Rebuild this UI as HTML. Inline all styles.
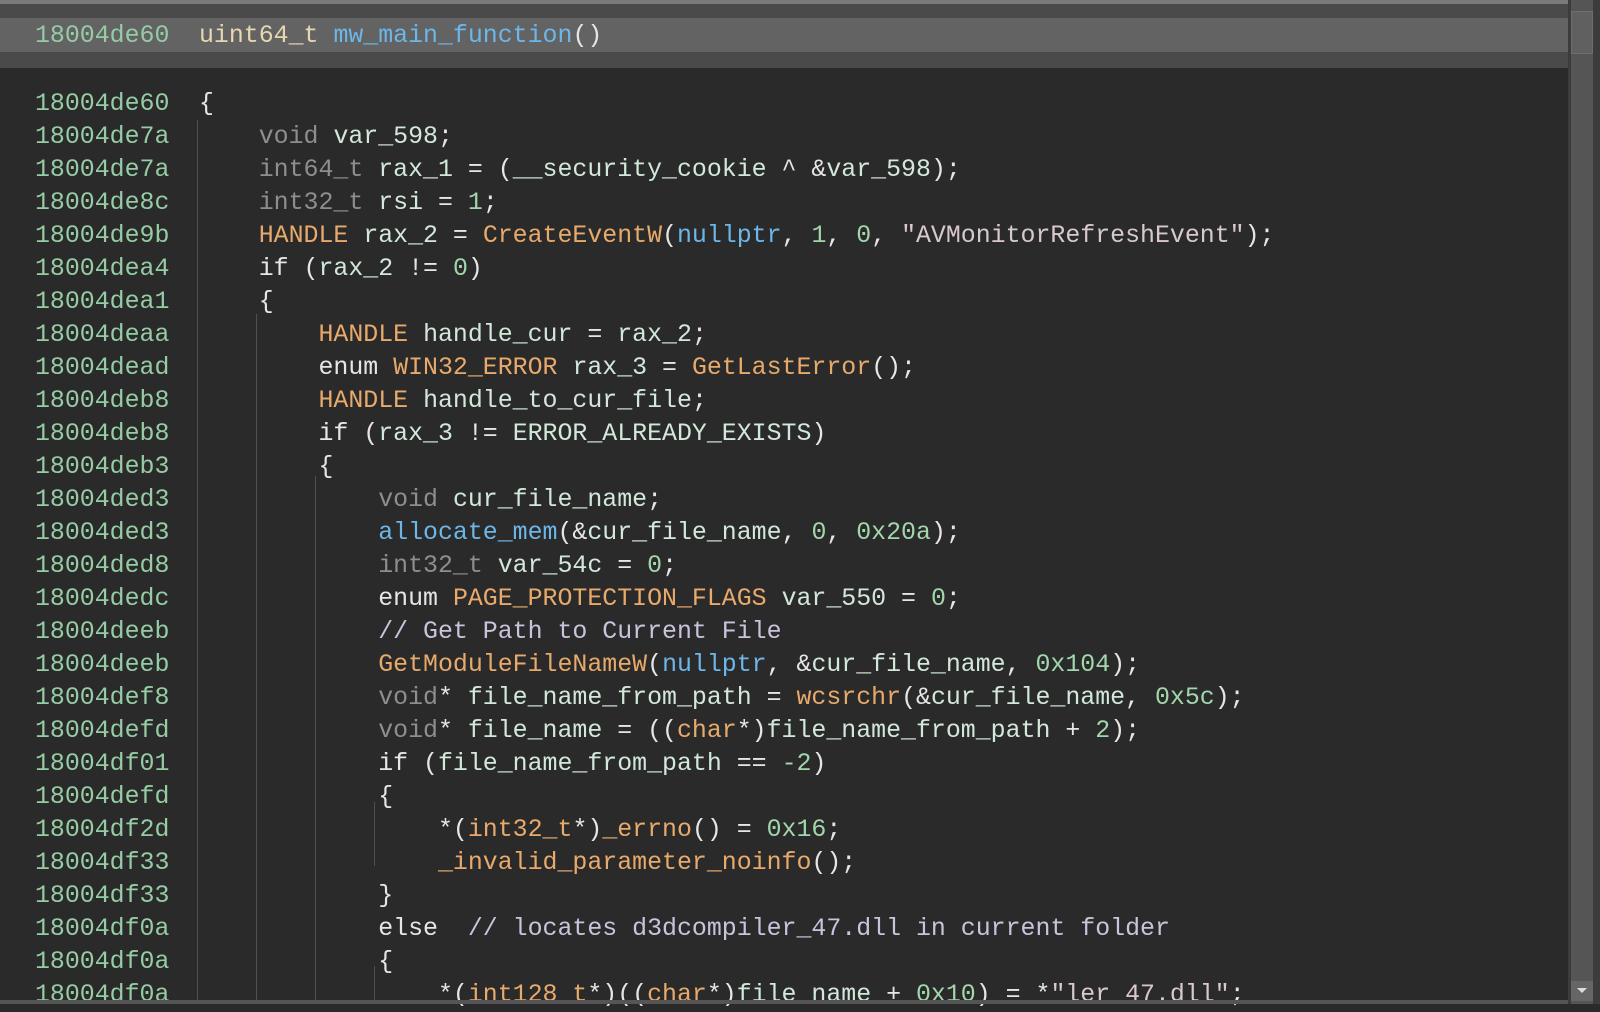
<!DOCTYPE html>
<html><head><meta charset="utf-8"><style>
body{margin:0;width:1600px;height:1004px;background:#2a2a2a;overflow:hidden;position:relative;font-family:"Liberation Mono",monospace;font-size:24.9px;}
.top{position:absolute;left:0;top:0;width:1568px;height:68px;background:#4a4a4a;}
.top .edge{position:absolute;left:0;top:0;width:1568px;height:4px;background:#7a7a7a;}
.hl{position:absolute;left:0;top:18px;width:1568px;height:34px;background:#636363;}
.sb{position:absolute;left:1568px;top:0;width:32px;height:1004px;background:#3c3c3c;}
.track{position:absolute;left:1571px;top:0;width:22px;height:1004px;background:#555;}
.thumb{position:absolute;left:1571px;top:11px;width:22px;height:43px;background:#606060;border:1px solid #6e6e6e;box-sizing:border-box;}
.arrow{position:absolute;left:1571px;top:981px;width:22px;height:20px;background:#666;}
.arrow:after{content:"";position:absolute;left:6px;top:7px;border-left:5px solid transparent;border-right:5px solid transparent;border-top:5px solid #ddd;}
.bot{position:absolute;left:0;top:1000px;width:1568px;height:4px;background:#555;}
.l{position:absolute;left:35px;height:33px;line-height:33px;white-space:pre;color:#e6e6e6;}
.a{color:#95cca4;display:inline-block;width:164px;}
.t{color:#8e8e8e}.o{color:#e8aa6c}.b{color:#6cb6e8}.n{color:#a2d6ac}.v{color:#d2e8da}.c{color:#cbc3dc}.s{color:#d8c8d0}.k{color:#e8e8e8}
.g{position:absolute;width:1px;background:#505050;}
</style></head><body>
<div class="top"><div class="edge"></div></div>
<div class="hl"></div>
<div class="l" style="top:20px"><span class="a">18004de60</span><span class="s" style="color:#e8d6b0">uint64_t</span> <span class="b">mw_main_function</span>()</div>
<div class="g" style="left:197px;top:120px;height:884px"></div>
<div class="g" style="left:256px;top:314px;height:690px"></div>
<div class="g" style="left:315px;top:476px;height:528px"></div>
<div class="g" style="left:374px;top:802px;height:64px"></div>
<div class="g" style="left:374px;top:966px;height:38px"></div>
<div class="l" style="top:88px"><span class="a">18004de60</span>{</div>
<div class="l" style="top:121px"><span class="a">18004de7a</span>    <span class="t">void</span> <span class="v">var_598</span>;</div>
<div class="l" style="top:154px"><span class="a">18004de7a</span>    <span class="t">int64_t</span> <span class="v">rax_1</span> = (<span class="v">__security_cookie</span> ^ &amp;<span class="v">var_598</span>);</div>
<div class="l" style="top:187px"><span class="a">18004de8c</span>    <span class="t">int32_t</span> <span class="v">rsi</span> = <span class="n">1</span>;</div>
<div class="l" style="top:220px"><span class="a">18004de9b</span>    <span class="o">HANDLE</span> <span class="v">rax_2</span> = <span class="o">CreateEventW</span>(<span class="b">nullptr</span>, <span class="n">1</span>, <span class="n">0</span>, <span class="s">"AVMonitorRefreshEvent"</span>);</div>
<div class="l" style="top:253px"><span class="a">18004dea4</span>    if (<span class="v">rax_2</span> != <span class="n">0</span>)</div>
<div class="l" style="top:286px"><span class="a">18004dea1</span>    {</div>
<div class="l" style="top:319px"><span class="a">18004deaa</span>        <span class="o">HANDLE</span> <span class="v">handle_cur</span> = <span class="v">rax_2</span>;</div>
<div class="l" style="top:352px"><span class="a">18004dead</span>        enum <span class="o">WIN32_ERROR</span> <span class="v">rax_3</span> = <span class="o">GetLastError</span>();</div>
<div class="l" style="top:385px"><span class="a">18004deb8</span>        <span class="o">HANDLE</span> <span class="v">handle_to_cur_file</span>;</div>
<div class="l" style="top:418px"><span class="a">18004deb8</span>        if (<span class="v">rax_3</span> != <span class="v">ERROR_ALREADY_EXISTS</span>)</div>
<div class="l" style="top:451px"><span class="a">18004deb3</span>        {</div>
<div class="l" style="top:484px"><span class="a">18004ded3</span>            <span class="t">void</span> <span class="v">cur_file_name</span>;</div>
<div class="l" style="top:517px"><span class="a">18004ded3</span>            <span class="b">allocate_mem</span>(&amp;<span class="v">cur_file_name</span>, <span class="n">0</span>, <span class="n">0x20a</span>);</div>
<div class="l" style="top:550px"><span class="a">18004ded8</span>            <span class="t">int32_t</span> <span class="v">var_54c</span> = <span class="n">0</span>;</div>
<div class="l" style="top:583px"><span class="a">18004dedc</span>            enum <span class="o">PAGE_PROTECTION_FLAGS</span> <span class="v">var_550</span> = <span class="n">0</span>;</div>
<div class="l" style="top:616px"><span class="a">18004deeb</span>            <span class="c">// Get Path to Current File</span></div>
<div class="l" style="top:649px"><span class="a">18004deeb</span>            <span class="o">GetModuleFileNameW</span>(<span class="b">nullptr</span>, &amp;<span class="v">cur_file_name</span>, <span class="n">0x104</span>);</div>
<div class="l" style="top:682px"><span class="a">18004def8</span>            <span class="t">void</span>* <span class="v">file_name_from_path</span> = <span class="o">wcsrchr</span>(&amp;<span class="v">cur_file_name</span>, <span class="n">0x5c</span>);</div>
<div class="l" style="top:715px"><span class="a">18004defd</span>            <span class="t">void</span>* <span class="v">file_name</span> = ((<span class="o">char</span>*)<span class="v">file_name_from_path</span> + <span class="n">2</span>);</div>
<div class="l" style="top:748px"><span class="a">18004df01</span>            if (<span class="v">file_name_from_path</span> == <span class="n">-2</span>)</div>
<div class="l" style="top:781px"><span class="a">18004defd</span>            {</div>
<div class="l" style="top:814px"><span class="a">18004df2d</span>                *(<span class="o">int32_t</span>*)<span class="o">_errno</span>() = <span class="n">0x16</span>;</div>
<div class="l" style="top:847px"><span class="a">18004df33</span>                <span class="o">_invalid_parameter_noinfo</span>();</div>
<div class="l" style="top:880px"><span class="a">18004df33</span>            }</div>
<div class="l" style="top:913px"><span class="a">18004df0a</span>            else  <span class="c">// locates d3dcompiler_47.dll in current folder</span></div>
<div class="l" style="top:946px"><span class="a">18004df0a</span>            {</div>
<div class="l" style="top:979px"><span class="a">18004df0a</span>                *(<span class="o">int128_t</span>*)((<span class="o">char</span>*)<span class="v">file_name</span> + <span class="n">0x10</span>) = *<span class="s">"ler_47.dll"</span>;</div>
<div class="bot"></div>
<div class="sb"></div><div class="track"></div><div class="thumb"></div><div class="arrow"></div>
</body></html>
